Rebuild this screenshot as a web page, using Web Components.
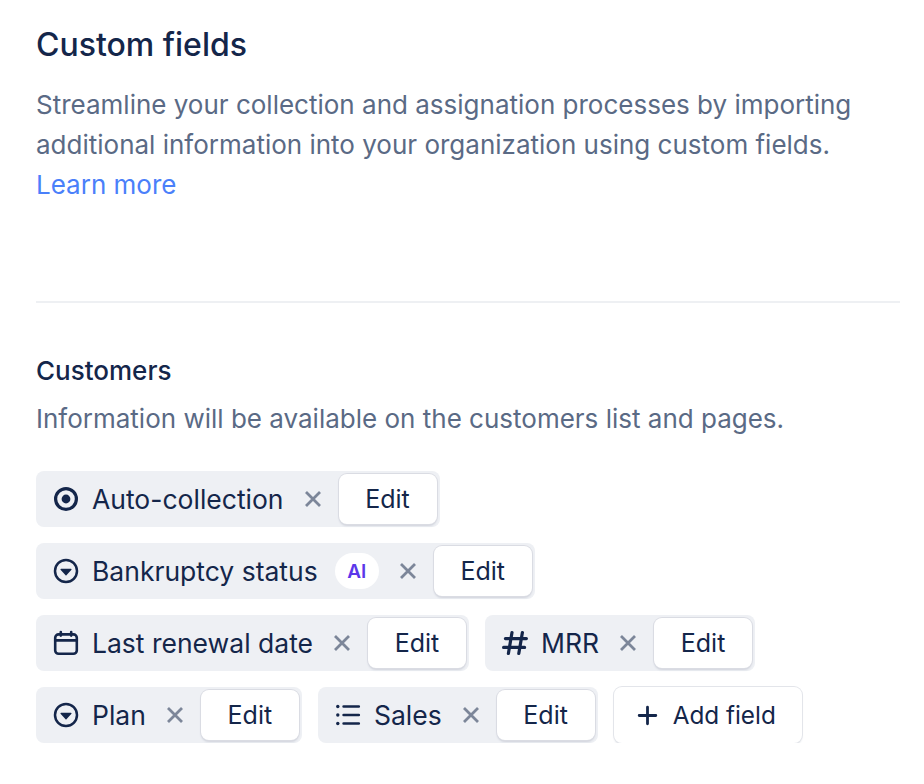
<!DOCTYPE html>
<html>
<head>
<meta charset="utf-8">
<style>
html, body { margin: 0; background: #fff; }
body { font-family: Inter, "Liberation Sans", sans-serif; }
</style>
</head>
<body>
<settings-page></settings-page>

<script>
const ICONS = {
  radio: '<circle cx="12" cy="12" r="10.4" fill="none" stroke="currentColor" stroke-width="3.2"/><circle cx="12" cy="12" r="4.4" fill="currentColor"/>',
  select: '<circle cx="12" cy="12" r="11" fill="none" stroke="currentColor" stroke-width="2.5"/><path d="M7 9.8h10a.6.6 0 0 1 .45 1l-5 5.4a.6.6 0 0 1-.9 0l-5-5.4a.6.6 0 0 1 .45-1z" fill="currentColor"/>',
  date: '<rect x="1.2" y="3.4" width="21.6" height="19.4" rx="3.4" fill="none" stroke="currentColor" stroke-width="2.6"/><path d="M1.2 9.4h21.6M6.8 1v3.6M17.2 1v3.6" fill="none" stroke="currentColor" stroke-width="2.6" stroke-linecap="round"/>',
  number: '<path d="M9 1.5 5.4 22.5M19.4 1.5l-3.6 21M2.4 7.6h21M.6 16.4h21" fill="none" stroke="currentColor" stroke-width="3.2" stroke-linecap="round"/>',
  list: '<path d="M7.6 3.5h15.2M7.6 12h15.2M7.6 20.5h15.2" fill="none" stroke="currentColor" stroke-width="2.6" stroke-linecap="round"/><circle cx="1.8" cy="3.5" r="1.7" fill="currentColor"/><circle cx="1.8" cy="12" r="1.7" fill="currentColor"/><circle cx="1.8" cy="20.5" r="1.7" fill="currentColor"/>',
  plus: '<path d="M12 2.5v19M2.5 12h19" fill="none" stroke="currentColor" stroke-width="3.2" stroke-linecap="round"/>'
}

const chipTemplate = document.createElement('template')
chipTemplate.innerHTML = `
<style>
:host {
  display: inline-flex;
  align-items: center;
  height: 56px;
  box-sizing: border-box;
  padding: 0 3px 0 18px;
  background: #eef0f4;
  border-radius: 8px;
  color: #14264a;
  font-size: 26.5px;
  font-weight: 400;
}
svg.icon { width: 24px; height: 24px; flex: none; margin-right: 14px; overflow: visible; }
.x { width: 18px; height: 18px; flex: none; margin: 0 17px 0 20px; color: #7c8699; }
button {
  width: 98px;
  height: 50px;
  box-sizing: border-box;
  border: 0;
  border-radius: 8px;
  background: #fff;
  color: #14264a;
  font: inherit;
  font-size: 25px;
  box-shadow: 0 0 0 1px #dadce3, 0 2px 2px #d0d3dc;
  padding: 0;
}
::slotted(ai-badge) { margin-left: 17px; margin-right: 0; }
</style>
<svg class="icon" viewBox="0 0 24 24"></svg>
<span><slot></slot></span>
<slot name="badge"></slot>
<svg class="x" viewBox="0 0 18 18"><path d="M2 2l14 14M16 2 2 16" fill="none" stroke="currentColor" stroke-width="2.8"/></svg>
<button>Edit</button>
`

class FieldChip extends HTMLElement {
  constructor () {
    super()
    this.attachShadow({ mode: 'open' })
    this.shadowRoot.appendChild(chipTemplate.content.cloneNode(true))
  }

  connectedCallback () {
    this.shadowRoot.querySelector('.icon').innerHTML = ICONS[this.getAttribute('icon')]
  }
}

const badgeTemplate = document.createElement('template')
badgeTemplate.innerHTML = `
<style>
:host {
  display: inline-flex;
  align-items: center;
  justify-content: center;
  width: 44px;
  height: 36px;
  border-radius: 18px;
  background: #fff;
  color: #5b37ea;
  font-size: 19px;
  font-weight: 600;
}
</style>
<slot></slot>
`

class AiBadge extends HTMLElement {
  constructor () {
    super()
    this.attachShadow({ mode: 'open' })
    this.shadowRoot.appendChild(badgeTemplate.content.cloneNode(true))
  }
}

const addTemplate = document.createElement('template')
addTemplate.innerHTML = `
<style>
:host {
  display: inline-flex;
  align-items: center;
  height: 56px;
  box-sizing: border-box;
  padding: 0 26px 0 23px;
  border-radius: 8px;
  background: #fff;
  color: #14264a;
  font-size: 24.3px;
  box-shadow: 0 0 0 1px #e3e5ea, 0 2px 2px #e3e5ea;
}
svg { width: 21px; height: 21px; margin-right: 15px; flex: none; overflow: visible; }
</style>
<svg viewBox="0 0 24 24"></svg>
<slot></slot>
`

class AddField extends HTMLElement {
  constructor () {
    super()
    this.attachShadow({ mode: 'open' })
    this.shadowRoot.appendChild(addTemplate.content.cloneNode(true))
    this.shadowRoot.querySelector('svg').innerHTML = ICONS.plus
  }
}

const pageTemplate = document.createElement('template')
pageTemplate.innerHTML = `
<style>
:host {
  display: block;
  padding: 24px 24px 0 36px;
  color: #14264a;
}
h1 { margin: 0 0 19px; font-size: 32px; line-height: 42px; font-weight: 500; }
p { margin: 0; font-size: 26px; line-height: 40px; color: #5a6a85; }
a { color: #4a80fa; text-decoration: none; display: block; }
hr { border: 0; height: 2px; background: #eef0f3; margin: 96px 0 50px; }
h2 { margin: 0 0 10px; font-size: 26px; line-height: 36px; font-weight: 500; }
.fields { display: flex; flex-wrap: wrap; gap: 16px; margin-top: 32px; align-items: center; }
.row { display: flex; gap: 16px; width: 100%; }
</style>
<h1>Custom fields</h1>
<p>Streamline your collection and assignation processes by importing<br>additional information into your organization using custom fields.<a>Learn more</a></p>
<hr>
<h2>Customers</h2>
<p>Information will be available on the customers list and pages.</p>
<div class="fields">
  <div class="row"><field-chip icon="radio">Auto-collection</field-chip></div>
  <div class="row"><field-chip icon="select">Bankruptcy status<ai-badge slot="badge">AI</ai-badge></field-chip></div>
  <div class="row"><field-chip icon="date">Last renewal date</field-chip><field-chip icon="number">MRR</field-chip></div>
  <div class="row"><field-chip icon="select">Plan</field-chip><field-chip icon="list">Sales</field-chip><add-field>Add field</add-field></div>
</div>
`

class SettingsPage extends HTMLElement {
  constructor () {
    super()
    this.attachShadow({ mode: 'open' })
    this.shadowRoot.appendChild(pageTemplate.content.cloneNode(true))
  }
}

customElements.define('field-chip', FieldChip)
customElements.define('ai-badge', AiBadge)
customElements.define('add-field', AddField)
customElements.define('settings-page', SettingsPage)
</script>
</body>
</html>
